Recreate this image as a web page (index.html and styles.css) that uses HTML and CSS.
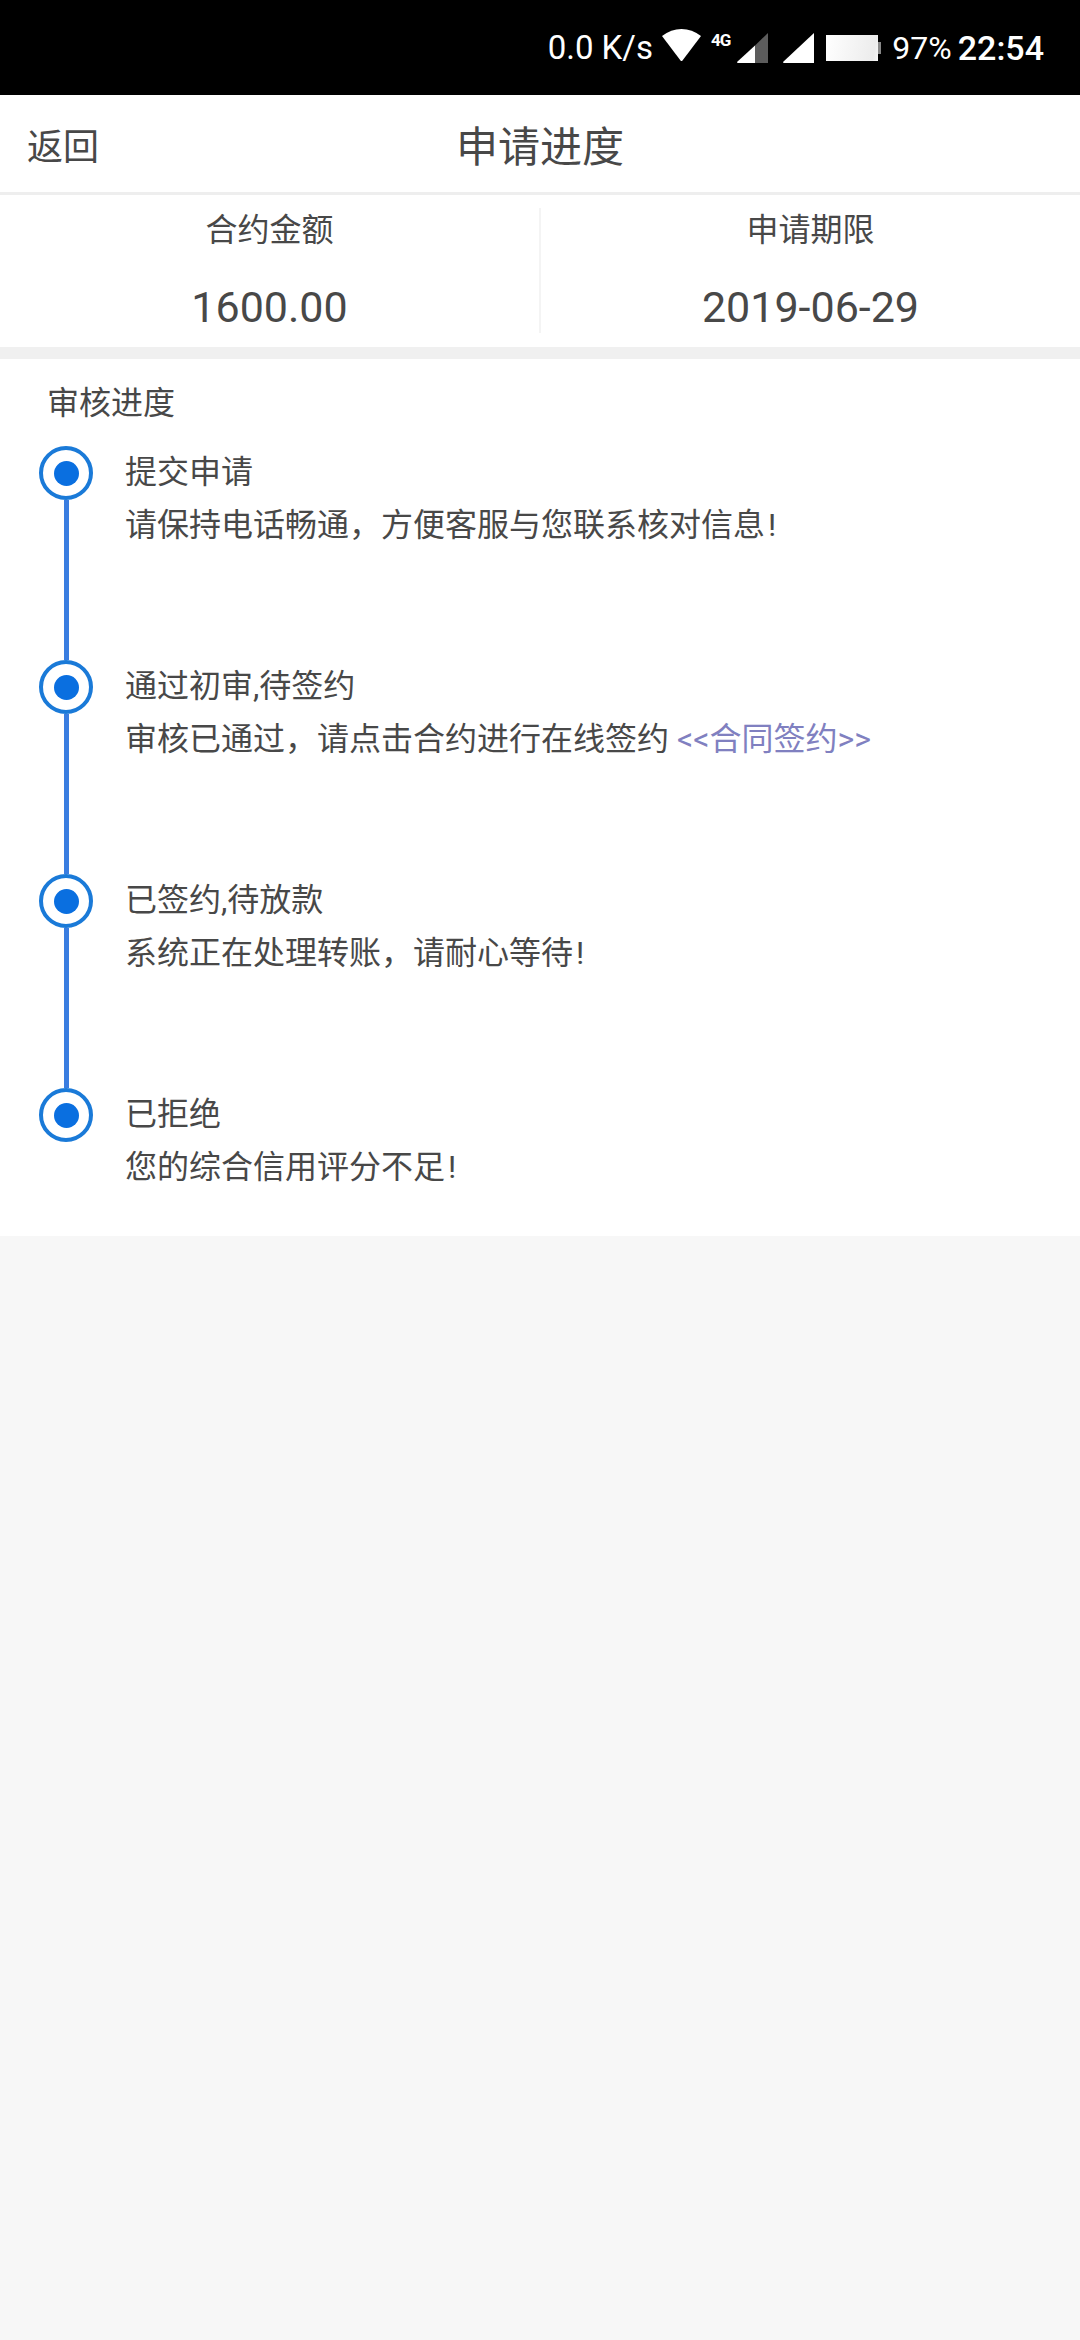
FILE: index.html
```html
<!DOCTYPE html>
<html lang="zh-CN">

<head>
    <meta charset="UTF-8">
    <title>申请进度</title>
    <link rel="stylesheet" href="styles.css">
</head>

<body>

    <div class="status-bar">
        <span class="net-speed">0.0 K/s</span>
        <svg class="wifi" width="39" height="32" viewBox="0 0 39 32">
            <path d="M0 7C6 2.5 12.500 0 19.500 0S33 2.500 39 7L20.500 31.500Q19.500 32.500 18.500 31.500Z" fill="#fff" />
        </svg>
        <span class="net-type">4G</span>
        <svg class="signal" width="31" height="30" viewBox="0 0 31 30">
            <path d="M0 29 18 12.500V30H1Q0 30 0 29Z" fill="#fff" />
            <path d="M18 12.500 31 0V30H18Z" fill="#5c5c5c" />
        </svg>
        <svg class="signal" width="31" height="30" viewBox="0 0 31 30">
            <path d="M0 29 31 0V30H1Q0 30 0 29Z" fill="#fff" />
        </svg>
        <div class="battery"></div>
        <span class="battery-level">97%</span>
        <span class="clock">22:54</span>
    </div>

    <div class="top-bar">
        <a class="back">返回</a>
        <div class="page-title">申请进度</div>
        <span></span>
    </div>

    <div class="summary">
        <div class="summary-cell">
            <div class="summary-label">合约金额</div>
            <div class="summary-value">1600.00</div>
        </div>
        <div class="summary-cell">
            <div class="summary-label">申请期限</div>
            <div class="summary-value">2019-06-29</div>
        </div>
    </div>

    <div class="progress">
        <div class="progress-title">审核进度</div>

        <div class="step">
            <div class="marker">
                <div class="ring"><div class="dot"></div></div>
                <div class="connector"></div>
            </div>
            <div class="step-text">
                <div>提交申请</div>
                <div>请保持电话畅通，方便客服与您联系核对信息<span class="bang">!</span></div>
            </div>
        </div>

        <div class="step">
            <div class="marker">
                <div class="ring"><div class="dot"></div></div>
                <div class="connector"></div>
            </div>
            <div class="step-text">
                <div>通过初审,待签约</div>
                <div>审核已通过，请点击合约进行在线签约 <a class="sign-link">&lt;&lt;合同签约&gt;&gt;</a></div>
            </div>
        </div>

        <div class="step">
            <div class="marker">
                <div class="ring"><div class="dot"></div></div>
                <div class="connector"></div>
            </div>
            <div class="step-text">
                <div>已签约,待放款</div>
                <div>系统正在处理转账，请耐心等待<span class="bang">!</span></div>
            </div>
        </div>

        <div class="step last">
            <div class="marker">
                <div class="ring"><div class="dot"></div></div>
            </div>
            <div class="step-text">
                <div>已拒绝</div>
                <div>您的综合信用评分不足<span class="bang">!</span></div>
            </div>
        </div>
    </div>

</body>

</html>
```

FILE: styles.css
```css
* {
    box-sizing: border-box;
}

body {
    margin: 0;
    height: 2340px;
    background-color: #f7f7f7;
    color: #484848;
    font-family: Roboto, "Noto Sans CJK SC", sans-serif;
}

/* status bar */
.status-bar {
    display: flex;
    align-items: center;
    justify-content: flex-end;
    height: 95px;
    padding-right: 36px;
    background-color: #000;
    color: #fff;
}

.net-speed {
    font-size: 33px;
    margin-right: 9px;
}

.wifi {
    margin-top: -5px;
}

.net-type {
    align-self: flex-start;
    margin: 30px 7px 0 10px;
    font-size: 17px;
    font-weight: 700;
    letter-spacing: -1px;
}

.signal {
    margin: 1px 15px 0 0;
}

.signal + .signal {
    margin-right: 12px;
}

.battery {
    position: relative;
    width: 52px;
    height: 26px;
    margin-right: 14px;
    background: linear-gradient(100deg, #fff, #ececec 90%, #f8f8f8);
}

.battery::after {
    content: "";
    position: absolute;
    top: 7px;
    right: -3px;
    width: 3px;
    height: 12px;
    background-color: #888;
}

.battery-level {
    font-size: 32px;
    margin-right: 6px;
}

.clock {
    font-size: 34px;
    font-weight: 500;
}

/* top bar */
.top-bar {
    display: grid;
    grid-template-columns: 1fr auto 1fr;
    align-items: center;
    height: 100px;
    padding: 0 27px;
    background-color: #fff;
    border-bottom: 3px solid #eee;
}

.back {
    font-size: 36px;
}

.page-title {
    font-size: 42px;
}

/* contract amount and date */
.summary {
    display: flex;
    height: 164px;
    padding-top: 13px;
    background-color: #fff;
    border-bottom: 12px solid #f0f0f0;
}

.summary-cell {
    flex: 1;
    height: 125px;
    text-align: center;
}

.summary-cell:first-child {
    border-right: 2px solid #f4f4f4;
}

.summary-label {
    font-size: 32px;
    line-height: 44px;
}

.summary-value {
    margin-top: 33px;
    font-size: 43px;
    line-height: 44px;
}

/* review timeline */
.progress {
    padding: 22px 0 0 39px;
    background-color: #fff;
}

.progress-title {
    margin: 0 0 21px 8px;
    font-size: 32px;
    line-height: 44px;
}

.step {
    display: flex;
    height: 214px;
}

.step.last {
    height: 148px;
}

.marker {
    display: flex;
    flex-direction: column;
    align-items: center;
    width: 54px;
    margin-right: 32px;
}

.ring {
    display: flex;
    align-items: center;
    justify-content: center;
    flex-shrink: 0;
    width: 54px;
    height: 54px;
    border: 4px solid #1a7ad8;
    border-radius: 50%;
}

.dot {
    width: 25px;
    height: 25px;
    border-radius: 50%;
    background-color: #0a6fe0;
}

.connector {
    flex: 1;
    width: 5px;
    background-color: #3a7de0;
}

.step-text {
    font-size: 32px;
    line-height: 53px;
}

.bang {
    margin-left: 3px;
}

.sign-link {
    color: #8080c0;
}
```
